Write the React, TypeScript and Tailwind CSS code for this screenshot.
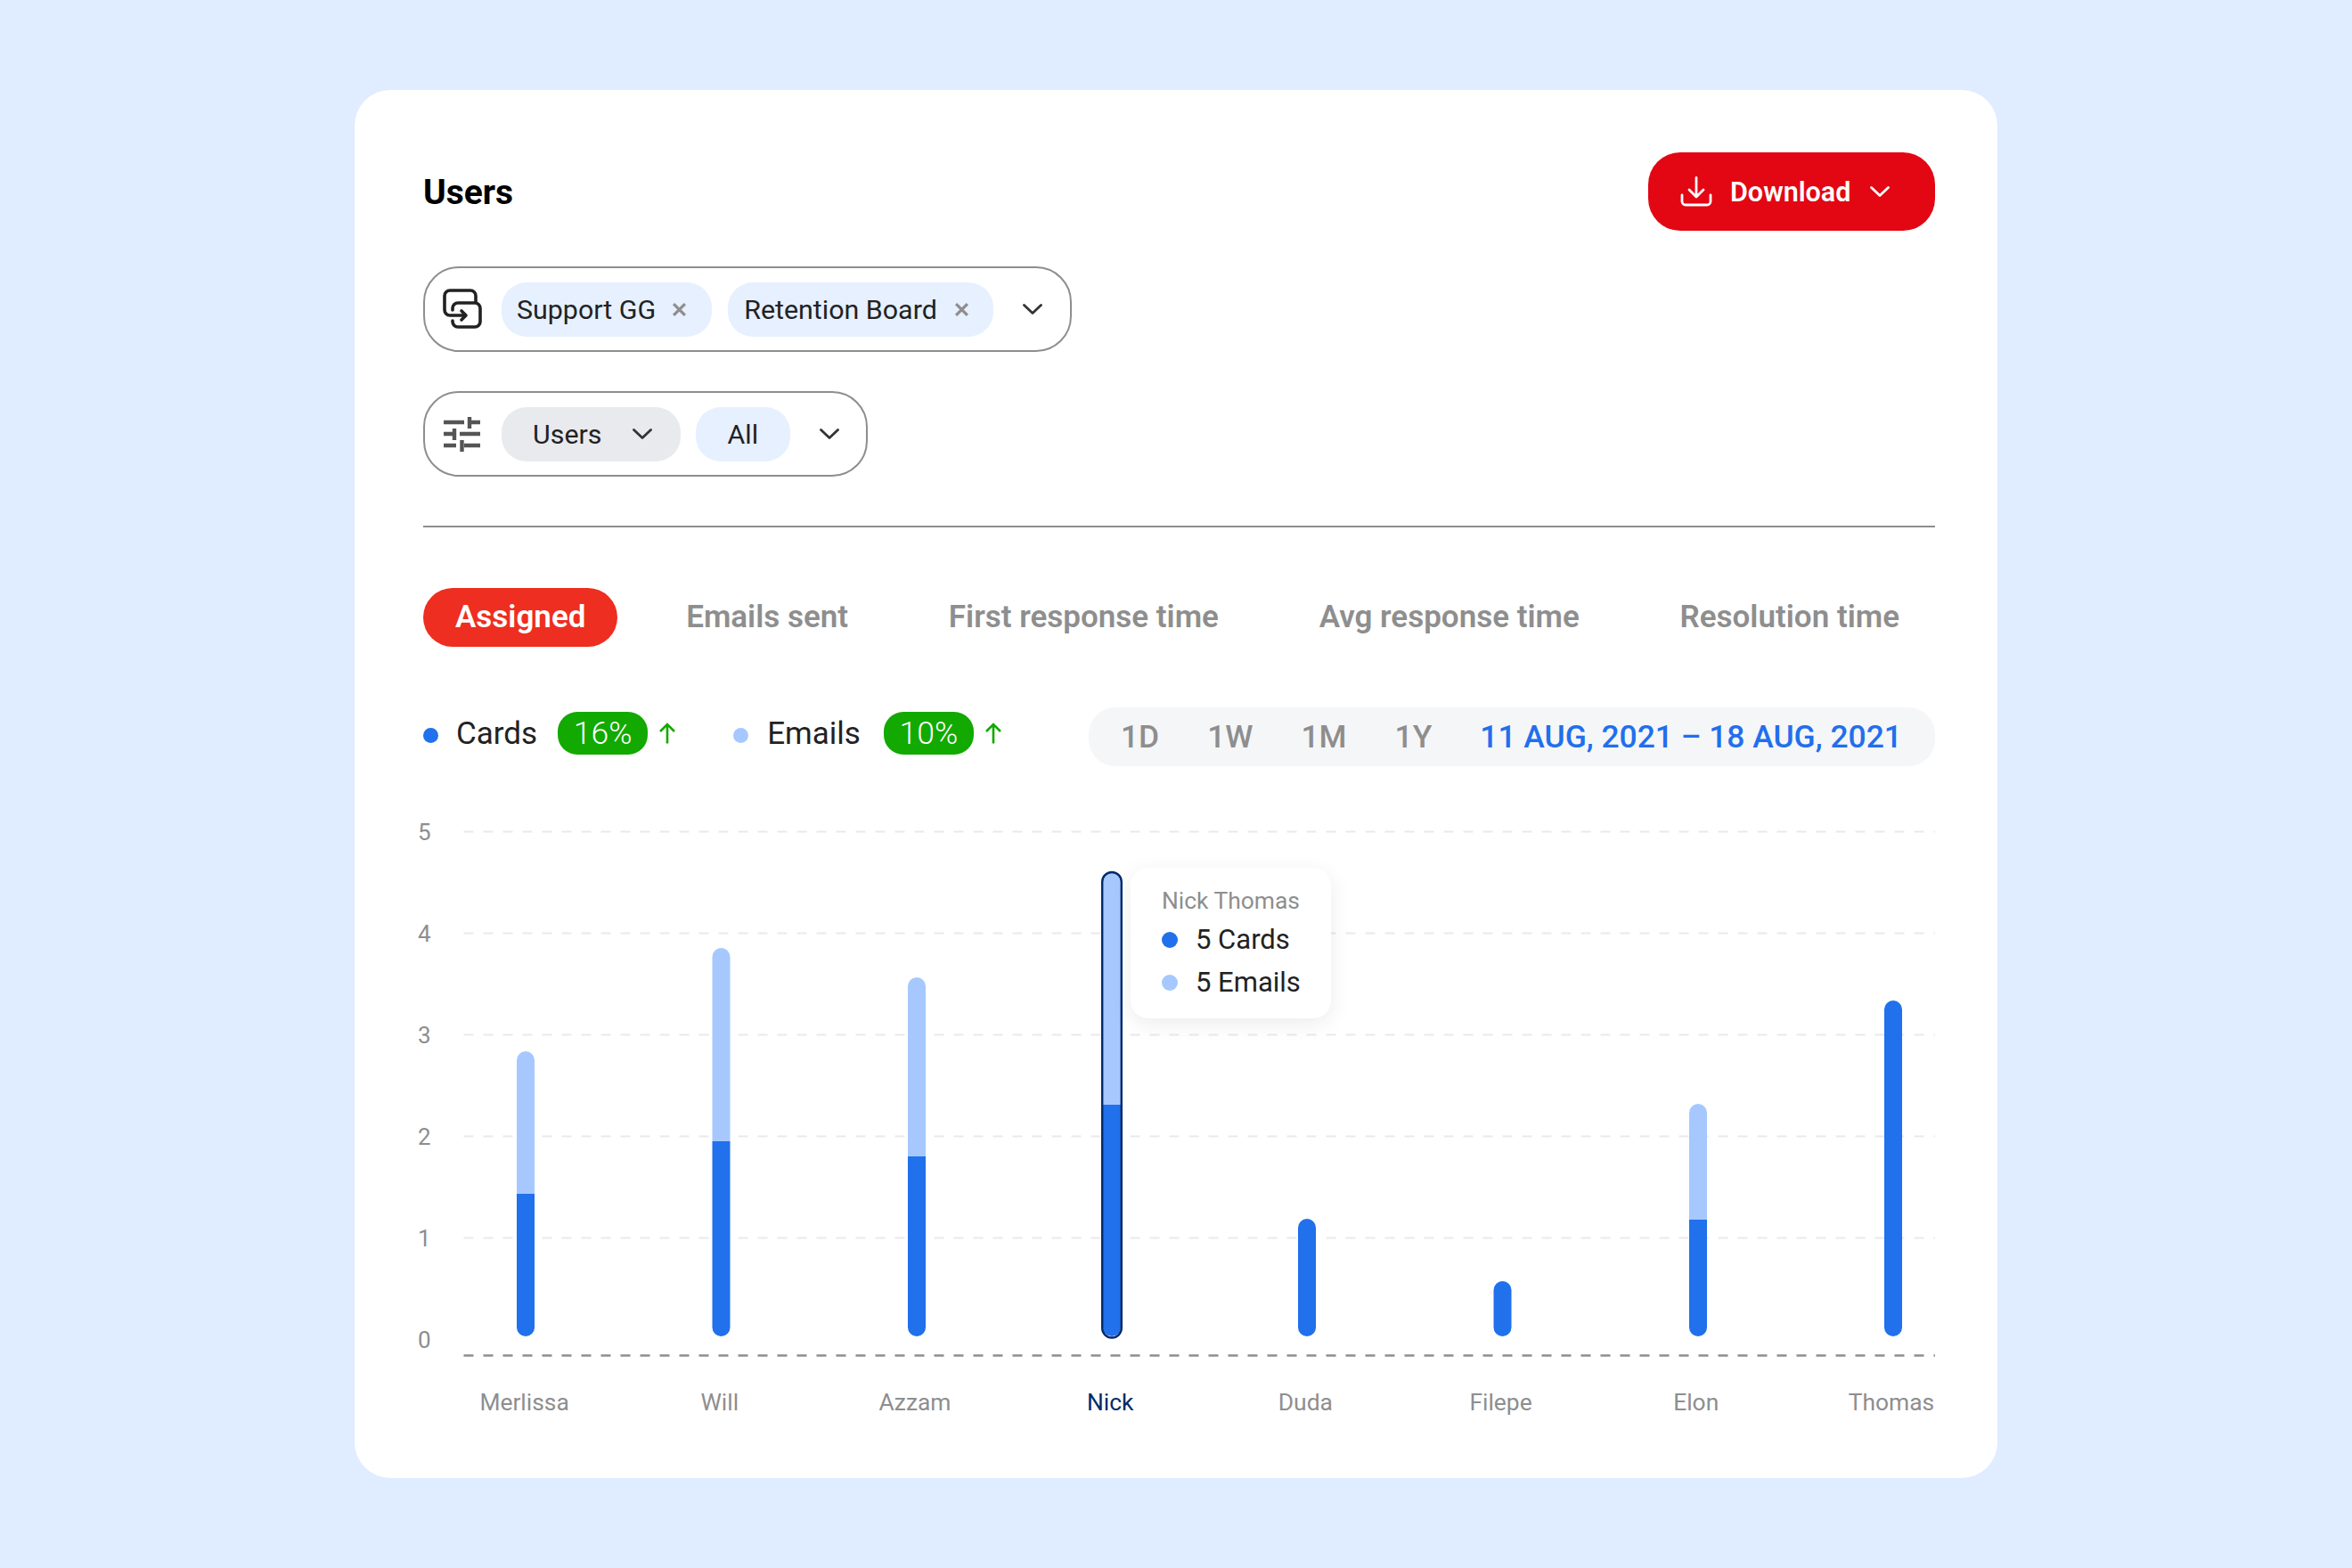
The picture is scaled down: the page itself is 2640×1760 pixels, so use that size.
const Chevron = ({ cls }: { cls: string }) => (
  <svg viewBox="0 0 22 12" className={cls} fill="none" stroke="currentColor" strokeWidth="2.8" strokeLinecap="round" strokeLinejoin="round">
    <path d="M1.5 1.5 L11 10.5 L20.5 1.5" />
  </svg>
);

const Close = () => (
  <svg viewBox="0 0 16 16" className="w-[17px] h-[17px] text-[#8e8e8e] shrink-0" fill="none" stroke="currentColor" strokeWidth="3">
    <path d="M2 2 L14 14 M14 2 L2 14" />
  </svg>
);

const SwapIcon = () => (
  <svg viewBox="0 0 70 65" className="w-[70px] h-[65px] shrink-0" fill="none" stroke="#222222" strokeWidth="3.6" strokeLinecap="round" strokeLinejoin="round">
    <path d="M48 24 V17 a6 6 0 0 0 -6 -6 H19 a6 6 0 0 0 -6 6 V33 a6 6 0 0 0 6 6 H36" />
    <path d="M32 34 L37 39 L32 44" />
    <path d="M22 33 V31 a6 6 0 0 1 6 -6 H47 a6 6 0 0 1 6 6 V46 a6 6 0 0 1 -6 6 H28 a6 6 0 0 1 -6 -6 V45" />
  </svg>
);

const SlidersIcon = () => (
  <svg viewBox="0 0 70 65" className="w-[70px] h-[65px] shrink-0" fill="none" stroke="#555555" strokeWidth="4.4">
    <path d="M13 19 H36 M44 19 H54 M42 13 V26" />
    <path d="M13 32 H23 M31 32 H54 M25 26 V39" />
    <path d="M13 45 H27 M36 45 H54 M33.500 39 V52" />
  </svg>
);

const DownloadIcon = () => (
  <svg viewBox="0 0 60 50" className="w-[60px] h-[50px] shrink-0" fill="none" stroke="#ffffff" strokeWidth="2.8" strokeLinecap="round" strokeLinejoin="round">
    <path d="M25 9.500 V30 M17 23 L25 31 L33 23" />
    <path d="M9 29 V36 a4 4 0 0 0 4 4 H37 a4 4 0 0 0 4 -4 V29" />
  </svg>
);

const ArrowUp = () => (
  <svg viewBox="0 0 20 24" className="w-[20px] h-[24px] shrink-0" fill="none" stroke="#12a900" strokeWidth="2.6" strokeLinejoin="miter">
    <path d="M10 23.500 V2 M2 10 L10 2 L18 10" />
  </svg>
);

const bars = [
  { x: 580, top: 1180, split: 1340 },
  { x: 799.5, top: 1064, split: 1281 },
  { x: 1019, top: 1097, split: 1298 },
  { x: 1238, top: 979, split: 1240, active: true },
  { x: 1457, top: 1368, split: 1368 },
  { x: 1676.500, top: 1438, split: 1438 },
  { x: 1896, top: 1239, split: 1369 },
  { x: 2115, top: 1123, split: 1123 },
];

const BOTTOM = 1500;

const Chart = () => (
  <svg viewBox="520 916 1652 610" className="w-[1652px] h-[610px] shrink-0 block" fill="none">
    {[933.500, 1047.500, 1161.500, 1275.500, 1389.500].map((y) => (
      <line key={y} x1="520.500" x2="2172" y1={y} y2={y} stroke="#e9eaef" strokeWidth="2" strokeDasharray="11 11" />
    ))}
    <line x1="520.500" x2="2172" y1="1521.500" y2="1521.500" stroke="#8e8e8e" strokeWidth="2.400" strokeDasharray="11 11" />
    {bars.map((b) => {
      const r = 10;
      const x = b.x;
      const w = 20;
      return (
        <g key={b.x}>
          {b.split > b.top && (
            <path d={`M${x} ${b.split} V${b.top + r} a${r} ${r} 0 0 1 ${w} 0 V${b.split} Z`} fill="#a6c8ff" />
          )}
          <path
            d={
              b.split > b.top
                ? `M${x} ${b.split} H${x + w} V${BOTTOM - r} a${r} ${r} 0 0 1 ${-w} 0 Z`
                : `M${x} ${b.top + r} a${r} ${r} 0 0 1 ${w} 0 V${BOTTOM - r} a${r} ${r} 0 0 1 ${-w} 0 Z`
            }
            fill="#2170ec"
          />
          {b.active && (
            <rect x={x - 0.8} y={b.top} width={w + 1.6} height={BOTTOM + 1.5 - b.top} rx={r + 0.8} stroke="#012a6b" strokeWidth="2.400" />
          )}
        </g>
      );
    })}
  </svg>
);

const names = ["Merlissa", "Will", "Azzam", "Nick", "Duda", "Filepe", "Elon", "Thomas"];
const tabs = ["Emails sent", "First response time", "Avg response time", "Resolution time"];
const ranges = ["1D", "1W", "1M", "1Y"];

export default function App() {
  return (
    <div className="w-[2640px] h-[1760px] bg-[#e0ecff] flex items-center justify-center [font-family:Roboto,sans-serif]">
      <div className="w-[1844px] h-[1558px] bg-white rounded-[40px] pl-[77px] pr-[70px] pt-[70px] flex flex-col">
        <div className="flex items-center justify-between h-[88px]">
          <h1 className="text-[39px] leading-[44px] font-bold text-black mt-[1px]">Users</h1>
          <button className="w-[322px] h-[88px] rounded-[36px] bg-[#e30613] flex items-center pl-[29px] text-white">
            <DownloadIcon />
            <span className="text-[30.500px] leading-[40px] font-semibold ml-[3px] mt-[2px]">Download</span>
            <Chevron cls="w-[22px] h-[12px] ml-[22px]" />
          </button>
        </div>

        <div className="mt-[40px] w-[728px] h-[96px] rounded-[40px] border-2 border-[#8e8e8e] flex items-center pl-[8px]">
          <span className="ml-[1px]"><SwapIcon /></span>
          <div className="ml-[7px] h-[61px] rounded-[28px] bg-[#e6f0ff] flex items-center pl-[17px] pr-[28px] gap-[18px]">
            <span className="text-[30.400px] leading-[40px] text-[#222222] mt-[1px]">Support GG</span>
            <Close />
          </div>
          <div className="ml-[18px] h-[61px] rounded-[28px] bg-[#e6f0ff] flex items-center pl-[18px] pr-[27px] gap-[19px]">
            <span className="text-[30.400px] leading-[40px] text-[#222222] mt-[1px]">Retention Board</span>
            <Close />
          </div>
          <Chevron cls="w-[22px] h-[12px] ml-[33px] text-[#333333]" />
        </div>

        <div className="mt-[44px] w-[499px] h-[96px] rounded-[40px] border-2 border-[#8e8e8e] flex items-center pl-[8px]">
          <SlidersIcon />
          <div className="ml-[8px] h-[61px] rounded-[28px] bg-[#e9eaee] flex items-center pl-[35px] pr-[32px] gap-[34px]">
            <span className="text-[30.400px] leading-[40px] text-[#222222] mt-[2px]">Users</span>
            <Chevron cls="w-[22px] h-[12px] text-[#333333]" />
          </div>
          <div className="ml-[17px] h-[61px] rounded-[28px] bg-[#e6f0ff] flex items-center px-[36px]">
            <span className="text-[30.400px] leading-[40px] text-[#222222] mt-[2px]">All</span>
          </div>
          <Chevron cls="w-[22px] h-[12px] ml-[33px] text-[#333333]" />
        </div>

        <div className="mt-[55px] h-[2px] bg-[#8e8e8e]" />

        <div className="mt-[68px] flex items-center gap-[40.700px] h-[66px]">
          <div className="h-[66px] rounded-[33px] bg-[#ee2e20] px-[36px] flex items-center text-white text-[35px] leading-[44px] font-semibold">
            Assigned
          </div>
          {tabs.map((t) => (
            <div key={t} className="px-[36px] text-[#8e8e8e] text-[35px] leading-[44px] font-semibold whitespace-nowrap">
              {t}
            </div>
          ))}
        </div>

        <div className="mt-[68px] flex items-start h-[66px]">
          <div className="mt-[5px] h-[48px] flex items-center">
            <span className="w-[17px] h-[17px] mt-[4px] rounded-full bg-[#2170ec]" />
            <span className="ml-[20px] text-[35px] leading-[44px] text-[#222222] mt-[1px]">Cards</span>
            <span className="ml-[23px] w-[101px] h-[48px] rounded-[22px] bg-[#12a900] text-white text-[35.500px] leading-[44px] font-light flex items-center justify-center">16%</span>
            <span className="ml-[12px]"><ArrowUp /></span>
            <span className="ml-[64px] w-[17px] h-[17px] mt-[4px] rounded-full bg-[#a6c8ff]" />
            <span className="ml-[21px] text-[35px] leading-[44px] text-[#222222] mt-[1px]">Emails</span>
            <span className="ml-[26px] w-[101px] h-[48px] rounded-[22px] bg-[#12a900] text-white text-[35.500px] leading-[44px] font-light flex items-center justify-center">10%</span>
            <span className="ml-[12px]"><ArrowUp /></span>
          </div>
          <div className="ml-auto w-[950px] h-[66px] rounded-[30px] bg-[#f5f6f8] flex items-center pl-[36px] gap-[54px] text-[35.400px] leading-[44px] font-medium whitespace-nowrap">
            {ranges.map((r) => (
              <span key={r} className="text-[#8e8e8e]">{r}</span>
            ))}
            <span className="text-[#216fed]">11 AUG, 2021 – 18 AUG, 2021</span>
          </div>
        </div>

        <div className="relative mt-[56px]">
          <div className="flex">
            <div className="w-[45px] flex flex-col gap-[78px]">
              {[5, 4, 3, 2, 1, 0].map((n) => (
                <span key={n} className="h-[36px] leading-[36px] text-[26px] text-[#8e8e8e] -ml-[6px]">{n}</span>
              ))}
            </div>
            <Chart />
          </div>
          <div className="absolute left-[794px] top-[58px] w-[225px] h-[169px] rounded-[20px] bg-white shadow-[0_6px_24px_rgba(0,0,0,0.08)] pl-[35px] pt-[18px] flex flex-col">
            <span className="text-[26.400px] leading-[38px] text-[#8e8e8e]">Nick Thomas</span>
            <div className="flex items-center h-[48px] mt-[1px]">
              <span className="w-[18px] h-[18px] rounded-full bg-[#2170ec]" />
              <span className="ml-[20px] text-[31px] leading-[40px] text-[#222222]">5 Cards</span>
            </div>
            <div className="flex items-center h-[48px]">
              <span className="w-[18px] h-[18px] rounded-full bg-[#a6c8ff]" />
              <span className="ml-[20px] text-[31px] leading-[40px] text-[#222222]">5 Emails</span>
            </div>
          </div>
          <div className="mt-[28px] ml-[4px] -mr-[60px] flex">
            {names.map((n) => (
              <span key={n} className={`w-[219.2px] shrink-0 text-center text-[26.400px] leading-[40px] ${n === "Nick" ? "text-[#012a6b]" : "text-[#8e8e8e]"}`}>{n}</span>
            ))}
          </div>
        </div>
      </div>
    </div>
  );
}
